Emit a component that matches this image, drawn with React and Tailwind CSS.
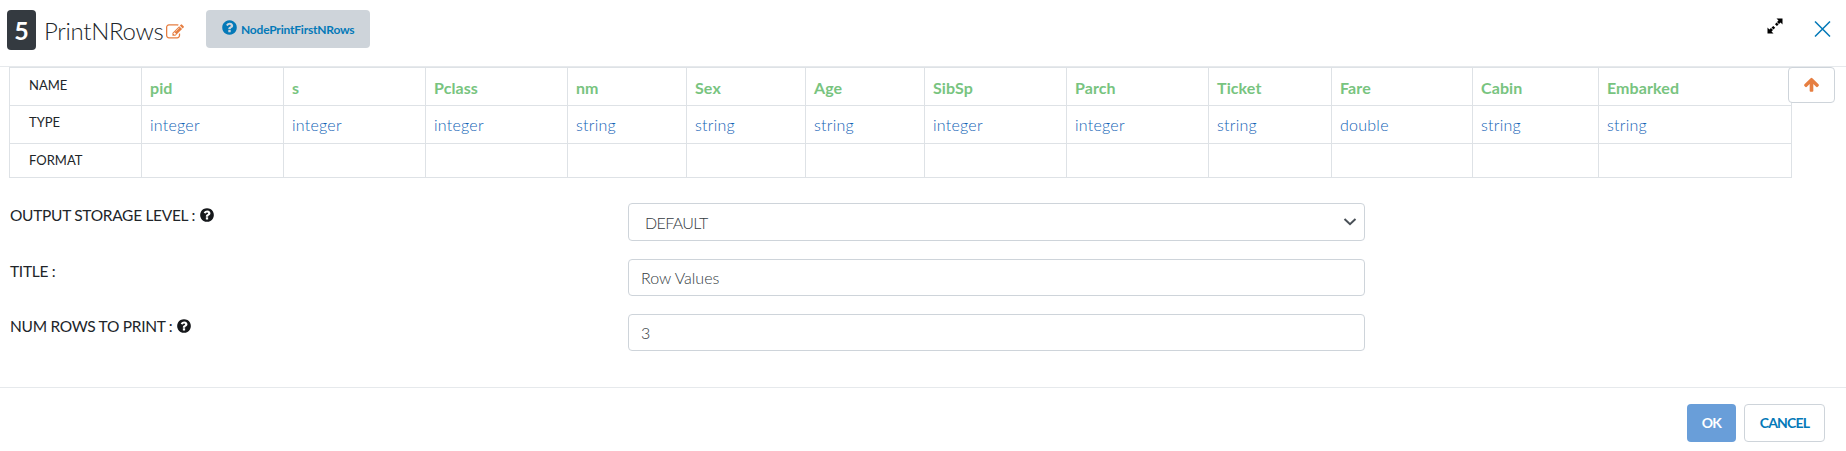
const PATHS = {
  question:
    'M1024 1376v-192q0-14-9-23t-23-9h-192q-14 0-23 9t-9 23v192q0 14 9 23t23 9h192q14 0 23-9t9-23zm256-672q0-88-55.5-163t-138.5-116-170-41q-243 0-371 213-15 24 8 42l132 100q7 6 19 6 16 0 25-12 53-68 86-92 34-24 86-24 48 0 85.5 26t37.5 59q0 38-20 61t-68 45q-63 28-115.5 86.5t-52.5 125.5v36q0 14 9 23t23 9h192q14 0 23-9t9-23q0-19 21.5-49.5t54.5-49.5q32-18 49-28.5t46-35 44.5-48 28-60.5 12.5-81zm384 192q0 209-103 385.5t-279.5 279.5-385.5 103-385.5-103-279.5-279.5-103-385.5 103-385.5 279.5-279.5 385.5-103 385.5 103 279.5 279.5 103 385.5z',
  edit: 'M888 1184l116-116-152-152-116 116v56h96v96h56zm440-720q-16-16-33 1l-350 350q-17 17-1 33t33-1l350-350q17-17 1-33zm80 594v190q0 119-84.5 203.5t-203.5 84.5h-832q-119 0-203.5-84.5t-84.5-203.5v-832q0-119 84.5-203.5t203.5-84.5h832q63 0 117 25 15 7 18 23 3 17-9 29l-49 49q-14 14-32 8-23-6-45-6h-832q-66 0-113 47t-47 113v832q0 66 47 113t113 47h832q66 0 113-47t47-113v-126q0-13 9-22l64-64q15-15 35-7t20 29zm-96-738l288 288-672 672h-288v-288zm444 132l-92 92-288-288 92-92q28-28 68-28t68 28l152 152q28 28 28 68t-28 68z',
  arrowUp:
    'M1675 971q0 51-37 90l-75 75q-38 38-91 38-54 0-90-38l-294-293v704q0 52-37.5 84.5t-90.5 32.5h-128q-53 0-90.5-32.5t-37.5-84.5v-704l-294 293q-36 38-90 38t-90-38l-75-75q-38-38-38-90 0-53 38-91l651-651q35-37 90-37 54 0 91 37l651 651q37 39 37 91z',
};

function Icon({ name, className }) {
  return (
    <svg viewBox="0 0 1792 1792" fill="currentColor" className={className} aria-hidden="true">
      <path d={PATHS[name]} />
    </svg>
  );
}

const COLUMNS = [
  ['pid', 'integer'],
  ['s', 'integer'],
  ['Pclass', 'integer'],
  ['nm', 'string'],
  ['Sex', 'string'],
  ['Age', 'string'],
  ['SibSp', 'integer'],
  ['Parch', 'integer'],
  ['Ticket', 'string'],
  ['Fare', 'double'],
  ['Cabin', 'string'],
  ['Embarked', 'string'],
];

function Header() {
  return (
    <header className="flex h-[67px] items-start border-b border-[#e6e9ec] pl-[7px]">
      <div className="mt-[10px] flex h-10 w-[29px] items-center justify-center rounded bg-[#343a40] pt-px text-[25px] font-bold text-white">
        5
      </div>
      <h1 className="mt-[15px] ml-[8px] w-[120px] text-[24px] leading-[32px] font-light tracking-[-0.3px] whitespace-nowrap text-[#212529]">
        PrintNRows
      </h1>
      <Icon name="edit" className="mt-[23px] ml-[2px] size-[18px] shrink-0 text-[#e67e41]" />
      <button className="mt-[10px] ml-[22px] flex h-[38px] w-[164px] items-center rounded bg-[#ced4da] pl-[15px] text-[#0479b8]">
        <Icon name="question" className="-mt-[3px] size-[17px]" />
        <span className="mt-[2px] ml-[3px] text-[12px] font-bold tracking-[-0.2px] whitespace-nowrap">NodePrintFirstNRows</span>
      </button>
      <svg viewBox="0 0 16 16" className="mt-[18px] ml-auto size-[16px]" aria-hidden="true">
        <path d="M9.5 0.5H15.5V6.5L13.6 4.6L12 6.1L10 4.1L11.5 2.5ZM6.5 15.5H0.5V9.5L2.4 11.4L4 9.9L6 11.9L4.5 13.5ZM9.6 4.5L11.6 6.5L9.9 8.1L8 6.2ZM6.3 7.9L8.2 9.8L6.5 11.5L4.5 9.5Z" fill="#000" />
      </svg>
      <svg viewBox="0 0 17 16" className="mt-[21px] mr-[15px] ml-[31px] h-4 w-[17px]" aria-hidden="true">
        <path d="M1 0.5L16 15.5M16 0.5L1 15.5" stroke="#0479b8" strokeWidth="1.5" fill="none" />
      </svg>
    </header>
  );
}

function SchemaTable() {
  const head = 'border-l border-t border-[#dee2e6] pl-[19px] text-[13px] text-[#212529]';
  const cell = 'border-l border-t border-[#dee2e6] pl-[8px] text-[16px] leading-6';
  return (
    <div className="ml-[9px] grid w-[1783px] grid-cols-[132px_142px_142px_142px_119px_119px_119px_142px_142px_123px_141px_126px_194px] grid-rows-[38px_38px_34px] border-r border-b border-[#dee2e6]">
      <div className={`${head} pt-[8px]`}>NAME</div>
      {COLUMNS.map(([name]) => (
        <div key={name} className={`${cell} pt-[8px] font-bold tracking-[0.1px] text-[#78c47f]`}>{name}</div>
      ))}
      <div className={`${head} pt-[7px]`}>TYPE</div>
      {COLUMNS.map(([name, type]) => (
        <div key={name} className={`${cell} pt-[7px] font-light tracking-[0.25px] text-[#0f62b5]`}>{type}</div>
      ))}
      <div className={`${head} pt-[7px]`}>FORMAT</div>
      {COLUMNS.map(([name]) => (
        <div key={name} className={cell} />
      ))}
    </div>
  );
}

function Field({ label, help, children }) {
  return (
    <div className="flex items-start">
      <label className="flex w-[618px] items-center gap-[4px] text-[15.5px] leading-6 tracking-[-0.3px] text-[#212529]">
        <span className="whitespace-nowrap">{label} :</span>
        {help && <Icon name="question" className="size-4 text-[#16181b]" />}
      </label>
      {children}
    </div>
  );
}

export default function App() {
  const control =
    'flex w-[737px] items-center rounded border border-[#ced4da] text-[16px] font-light text-[#343b42]';
  return (
    <main className="h-[451px] w-[1846px] overflow-hidden bg-white font-['Lato',sans-serif]">
      <Header />
      <div className="relative h-[112px]">
        <SchemaTable />
        <button className="absolute top-0 right-[11px] flex h-9 w-[47px] items-center justify-center rounded border border-[#ced4da] bg-white text-[#e67e41]">
          <Icon name="arrowUp" className="-mt-[2px] size-[17px]" />
        </button>
      </div>
      <section className="flex h-[208px] flex-col gap-[18px] pt-[24px] pl-[10px]">
        <Field label="OUTPUT STORAGE LEVEL" help>
          <div className={`${control} h-[38px] justify-between pt-[2px] pr-[7px] pl-[16px]`}>
            <span className="tracking-[-0.65px]">DEFAULT</span>
            <svg viewBox="0 0 14 8" className="-mt-[2px] h-2 w-[14px]" aria-hidden="true">
              <path d="M1.5 1L7 6.2L12.5 1" fill="none" stroke="#495057" strokeWidth="2" />
            </svg>
          </div>
        </Field>
        <Field label="TITLE">
          <div className={`${control} h-[37px] pl-[12px]`}>Row Values</div>
        </Field>
        <Field label="NUM ROWS TO PRINT" help>
          <div className={`${control} h-[37px] pl-[12px]`}>3</div>
        </Field>
      </section>
      <footer className="flex h-[64px] justify-end gap-2 border-t border-[#e6e9ec] pt-4 pr-[21px] text-[14px] font-bold tracking-[-0.8px]">
        <button className="h-[38px] w-[49px] rounded bg-[#699ed9] pb-[2px] text-white">OK</button>
        <button className="h-[38px] w-[81px] rounded border border-[#ced4da] pb-[2px] text-[#0479b8]">CANCEL</button>
      </footer>
    </main>
  );
}
